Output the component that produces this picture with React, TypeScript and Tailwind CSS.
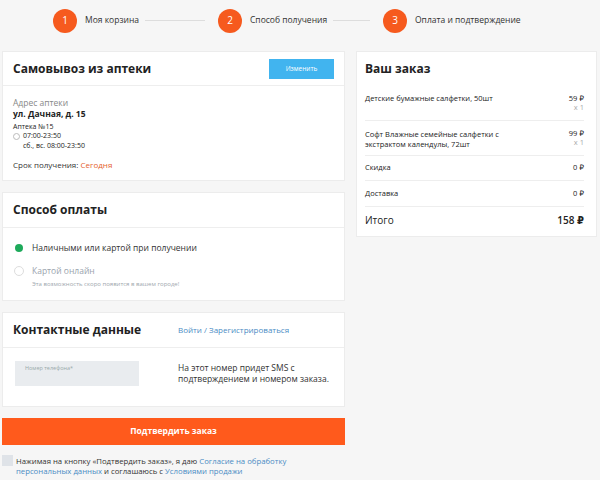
import React from "react";

const font = { fontFamily: '"Open Sans", "DejaVu Sans", sans-serif' };

function Step({ n, label, line }: { n: number; label: string; line?: boolean }) {
  return (
    <div className="flex items-center w-[165px]">
      <div className="w-[24px] h-[24px] rounded-full bg-[#f65a1e] text-white text-[10px] flex items-center justify-center shrink-0">{n}</div>
      <span className="ml-[8px] text-[8.5px] text-[#333] whitespace-nowrap">{label}</span>
      {line && <div className="ml-[6px] mr-[13px] flex-1 h-px bg-[#ddd]" />}
    </div>
  );
}

export default function App() {
  return (
    <div className="w-[600px] h-[480px] bg-[#f6f6f6] overflow-hidden text-[#222]" style={font}>
      <div className="h-[51px] flex items-center pl-[53px] pb-[12px] pt-[2px]">
        <Step n={1} label="Моя корзина" line />
        <Step n={2} label="Способ получения" line />
        <Step n={3} label="Оплата и подтверждение" />
      </div>
      <div className="flex pl-[2px] gap-[11px]">
        <div className="w-[343px] flex flex-col">
          {/* Card 1 */}
          <div className="h-[130px] bg-white border border-[#ececec]">
            <div className="h-[34px] border-b border-[#eee] flex items-center justify-between pl-[10px] pr-[10px]">
              <span className="text-[12px] font-bold text-[#222]">Самовывоз из аптеки</span>
              <div className="w-[65px] h-[20px] bg-[#41b4ef] text-white text-[6.5px] flex items-center justify-center">Изменить</div>
            </div>
            <div className="pl-[10px] pt-[11px]">
              <div className="text-[8.5px] text-[#888] leading-[11px]">Адрес аптеки</div>
              <div className="text-[8.5px] font-bold leading-[11px]">ул. Дачная, д. 15</div>
              <div className="text-[7px] leading-[9px] mt-[3px]">Аптека №15</div>
              <div className="flex items-center text-[7px] leading-[10px]">
                <span className="w-[7px] h-[7px] rounded-full border border-[#bbb] mr-[3px]" />
                07:00-23:50
              </div>
              <div className="text-[7px] leading-[9px] pl-[10px]">сб., вс. 08:00-23:50</div>
              <div className="text-[8px] leading-[10px] mt-[10px] text-[#333]">Срок получения: <span className="text-[#e5622d]">Сегодня</span></div>
            </div>
          </div>
          {/* Card 2 */}
          <div className="h-[109px] mt-[11px] bg-white border border-[#ececec]">
            <div className="h-[35px] border-b border-[#eee] flex items-center pl-[10px]">
              <span className="text-[12px] font-bold">Способ оплаты</span>
            </div>
            <div className="pl-[11px] pt-[14px]">
              <div className="flex items-center h-[12px]">
                <span className="w-[8px] h-[8px] rounded-full bg-[#1eaa5b] ml-[1px]" />
                <span className="ml-[9px] text-[8.5px] text-[#333]">Наличными или картой при получении</span>
              </div>
              <div className="flex items-center h-[12px] mt-[11px]">
                <span className="w-[10px] h-[10px] rounded-full border border-[#ddd]" />
                <span className="ml-[8px] text-[8.5px] text-[#9aa3ad]">Картой онлайн</span>
              </div>
              <div className="text-[6px] text-[#a0a7ae] pl-[18px] mt-[3px]">Эта возможность скоро появится в вашем городе!</div>
            </div>
          </div>
          {/* Card 3 */}
          <div className="h-[95px] mt-[11px] bg-white border border-[#ececec]">
            <div className="h-[35px] border-b border-[#eee] flex items-center pl-[10px]">
              <span className="text-[12px] font-bold w-[165px]">Контактные данные</span>
              <span className="text-[8px] text-[#4a8cc4]">Войти / Зарегистрироваться</span>
            </div>
            <div className="flex pt-[13px] pl-[12px]">
              <div className="w-[124px] h-[25px] bg-[#e9ecef] text-[5.5px] text-[#9aa] pl-[10px] pt-[3px]">Номер телефона*</div>
              <div className="ml-[39px] text-[8.5px] leading-[11px] text-[#333] pt-[1px]">На этот номер придет SMS с<br />подтверждением и номером заказа.</div>
            </div>
          </div>
          <div className="h-[27px] mt-[11px] bg-[#ff5a1c] text-white text-[8.5px] font-bold flex items-center justify-center">Подтвердить заказ</div>
          <div className="flex mt-[11px]">
            <div className="w-[11px] h-[11px] bg-[#dfe3e8] mt-[-1px]" />
            <div className="ml-[3px] text-[7.75px] leading-[10px] text-[#333]">
              Нажимая на кнопку «Подтвердить заказ», я даю <span className="text-[#4a8cc4]">Согласие на обработку</span><br />
              <span className="text-[#4a8cc4]">персональных данных</span> и соглашаюсь с <span className="text-[#4a8cc4]">Условиями продажи</span>
            </div>
          </div>
        </div>
        {/* Right */}
        <div className="w-[241px] h-[186px] bg-white border border-[#ececec] pl-[8px] pr-[12px]">
          <div className="text-[12px] font-bold pt-[8px] leading-[18px]">Ваш заказ</div>
          <div className="flex justify-between border-b border-[#eee] pt-[16px] pb-[8px] text-[7.5px] leading-[9px]">
            <span>Детские бумажные салфетки, 50шт</span>
            <div className="text-right"><div>59 ₽</div><div className="text-[#aaa]">x 1</div></div>
          </div>
          <div className="flex justify-between border-b border-[#eee] pt-[8px] pb-[6px] text-[7.5px] leading-[10px]">
            <span>Софт Влажные семейные салфетки с<br />экстрактом календулы, 72шт</span>
            <div className="text-right leading-[9px]"><div>99 ₽</div><div className="text-[#aaa]">x 1</div></div>
          </div>
          <div className="flex justify-between border-b border-[#eee] h-[25px] items-center text-[7.5px]">
            <span>Скидка</span><span>0 ₽</span>
          </div>
          <div className="flex justify-between border-b border-[#eee] h-[26px] items-center text-[7.5px]">
            <span>Доставка</span><span>0 ₽</span>
          </div>
          <div className="flex justify-between h-[27px] items-center text-[10px]">
            <span>Итого</span><span className="font-semibold">158 ₽</span>
          </div>
        </div>
      </div>
    </div>
  );
}
